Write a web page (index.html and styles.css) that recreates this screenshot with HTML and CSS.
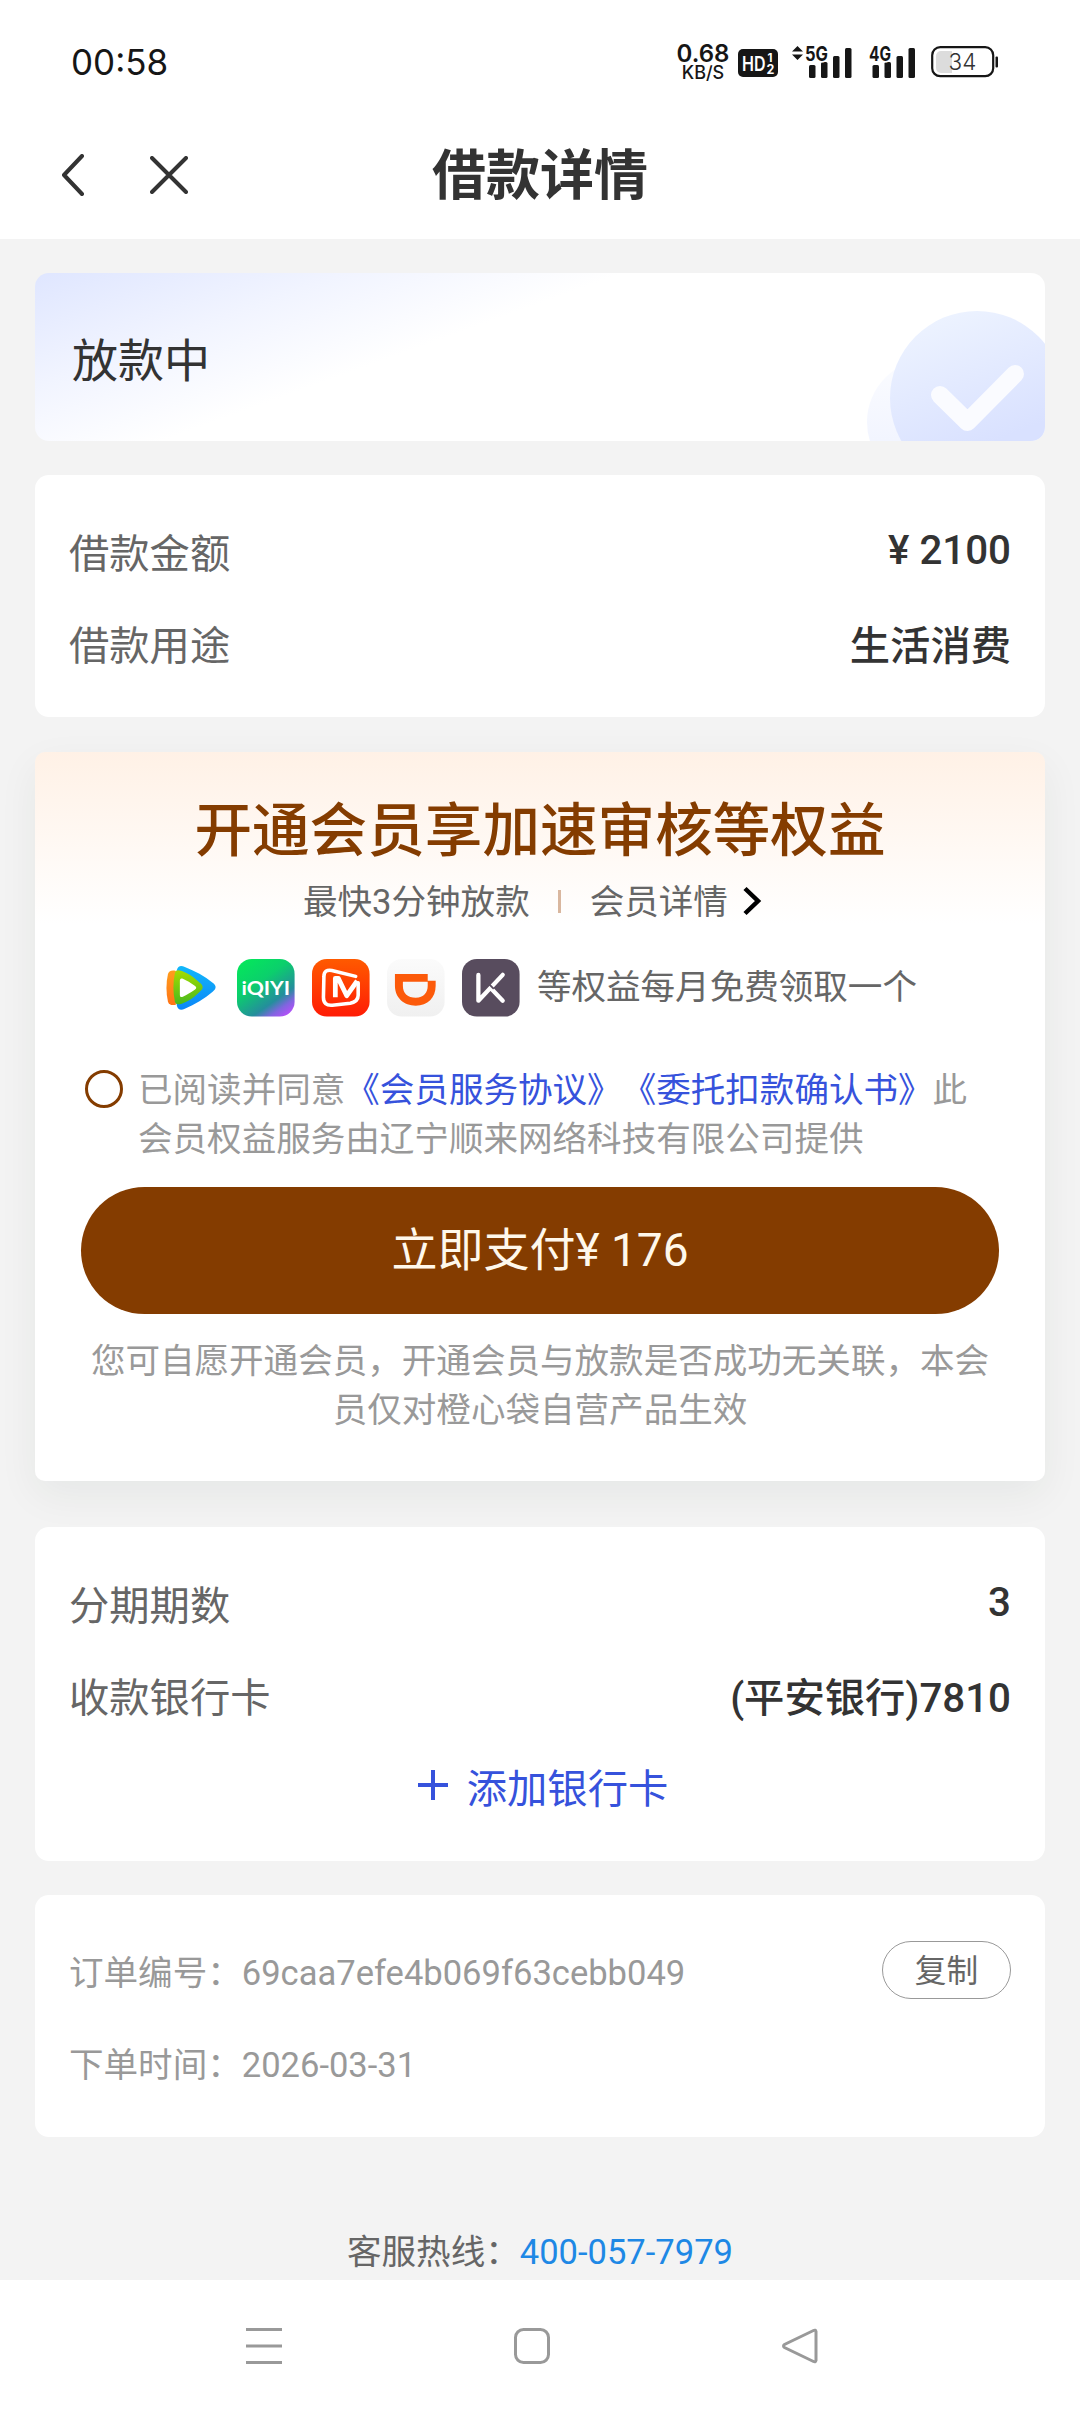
FILE: index.html
```html
<!DOCTYPE html>
<html lang="zh-CN">
<head>
<meta charset="utf-8">
<title>借款详情</title>
<link rel="stylesheet" href="styles.css">
</head>
<body>
<div class="screen">
  <div class="status-bar">
    <span class="clock">00:58</span>
    <div class="status-icons">
      <div class="speed"><span class="speed-value">0.68</span><span class="speed-unit">KB/S</span></div>
      <svg class="hd" width="40" height="28" viewBox="0 0 40 28">
        <rect width="40" height="28" rx="5" fill="#161616"/>
        <text x="4" y="21.500" font-size="20" font-weight="600" fill="#fff" textLength="23.500" lengthAdjust="spacingAndGlyphs">HD</text>
        <text x="29.500" y="13" font-size="11.500" font-weight="700" fill="#fff">1</text>
        <text x="28.500" y="25" font-size="12.500" font-weight="700" fill="#fff">2</text>
      </svg>
      <svg class="signal-5g" width="60" height="46" viewBox="0 -6 60 46">
        <path d="M0 6.500 5.500 1l5.500 5.500zM0 9.500h11L5.500 15z" fill="#161616"/>
        <g fill="#161616"><rect x="17" y="20" width="6.500" height="13" rx="1.500"/><rect x="29" y="17" width="6.500" height="16" rx="1.500"/><rect x="41" y="11" width="6.500" height="22" rx="1.500"/><rect x="53" y="3" width="6.500" height="30" rx="1.500"/></g>
        <text x="13" y="15.500" font-size="20" font-weight="700" fill="#161616" stroke="#fff" stroke-width="3" paint-order="stroke" textLength="23" lengthAdjust="spacingAndGlyphs">5G</text>
      </svg>
      <svg class="signal-4g" width="46" height="46" viewBox="0 -6 46 46">
        <g fill="#161616"><rect x="3.500" y="20" width="6.500" height="13" rx="1.500"/><rect x="15.500" y="17" width="6.500" height="16" rx="1.500"/><rect x="27.500" y="11" width="6.500" height="22" rx="1.500"/><rect x="39.500" y="3" width="6.500" height="30" rx="1.500"/></g>
        <text x="0" y="15.500" font-size="20" font-weight="700" fill="#161616" stroke="#fff" stroke-width="3" paint-order="stroke" textLength="22" lengthAdjust="spacingAndGlyphs">4G</text>
      </svg>
      <svg class="battery" width="68" height="32" viewBox="0 0 68 32">
        <rect x="1.200" y="1.200" width="61" height="29" rx="8" fill="#fff" stroke="#161616" stroke-width="2.200"/>
        <path d="M10 5h11v22H10a5 5 0 0 1-5-5V10a5 5 0 0 1 5-5z" fill="#dcdcdc"/>
        <rect x="64.500" y="10.500" width="2.500" height="11" rx="1" fill="#161616"/>
        <text x="31.500" y="24" font-size="22.500" font-weight="300" text-anchor="middle" fill="#333">34</text>
      </svg>
    </div>
  </div>

  <header class="nav">
    <div class="nav-actions">
      <svg width="24" height="42" viewBox="0 0 24 42"><path d="M21 2 3 21 21 40" class="nav-stroke"/></svg>
      <svg width="38" height="38" viewBox="0 0 38 38"><path d="M2 2l34 34M36 2 2 36" class="nav-stroke"/></svg>
    </div>
    <h1>借款详情</h1>
  </header>

  <main>
    <section class="card state">
      <span>放款中</span>
      <svg class="state-mark" width="180" height="131" viewBox="0 0 180 131">
        <defs>
          <linearGradient id="disc" x1="0.300" y1="0" x2="0.700" y2="1"><stop offset="0" stop-color="#edf3ff"/><stop offset=".75" stop-color="#d9e1ff"/></linearGradient>
          <linearGradient id="discBack" x1="0" y1="0" x2="0" y2="1"><stop offset="0" stop-color="#fbfcff"/><stop offset="1" stop-color="#edf1ff"/></linearGradient>
        </defs>
        <circle cx="65" cy="112" r="63" fill="url(#discBack)"/>
        <circle cx="112" cy="88" r="87" fill="url(#disc)"/>
        <path d="M75 85l27.500 27L150 64" fill="none" stroke="#fafbff" stroke-width="18" stroke-linecap="round" stroke-linejoin="round"/>
      </svg>
    </section>

    <section class="card rows loan">
      <div class="row"><span class="label">借款金额</span><span class="value">¥ 2100</span></div>
      <div class="row"><span class="label">借款用途</span><span class="value">生活消费</span></div>
    </section>

    <section class="card member">
      <h2>开通会员享加速审核等权益</h2>
      <div class="member-sub">
        <span>最快3分钟放款</span>
        <i class="divider"></i>
        <span>会员详情</span>
        <svg width="20" height="30" viewBox="0 0 20 30"><path d="M3 2.500 16 15 3 27.500" fill="none" stroke="#000" stroke-width="4.500"/></svg>
      </div>
      <div class="perks">
        <svg class="perk" viewBox="0 0 58 58">
          <defs>
            <linearGradient id="txB" x1="0" y1="0" x2="0" y2="1"><stop offset="0" stop-color="#12b8fa"/><stop offset="1" stop-color="#0b86f8"/></linearGradient>
            <linearGradient id="txO" x1="0" y1="0" x2="0" y2="1"><stop offset="0" stop-color="#ff9d1c"/><stop offset="1" stop-color="#ff7316"/></linearGradient>
            <linearGradient id="txG" x1="0" y1="0" x2="0" y2="1"><stop offset="0" stop-color="#a5dc00"/><stop offset="1" stop-color="#48b91d"/></linearGradient>
          </defs>
          <path d="M15 11c1-4 4-5 8-3 10 4 20 9 28 16 4 3 4 6 0 9-8 7-18 13-28 17-4 2-7 1-8-3-2-12-2-24 0-36z" fill="url(#txB)"/>
          <path d="M6 15c1-3 4-4 8-3v34c-4 1-7 0-8-3-2-9-2-19 0-28z" fill="url(#txO)"/>
          <path d="M13 14c1-3 3-3 7-2 8 3 13 7 18 12 4 3 4 6 0 9-5 5-10 9-18 12-4 1-6 1-7-2-2-10-2-19 0-29z" fill="url(#txG)"/>
          <path d="M18 22c0-2 1-3 3-2 4 2 8 4 12 7 2 1 2 3 0 4-4 3-8 5-12 7-2 1-3 0-3-2z" fill="#fff"/>
        </svg>
        <svg class="perk" viewBox="0 0 58 58">
          <defs><linearGradient id="iq" x1="0.200" y1="0" x2="0.900" y2="1"><stop offset="0" stop-color="#05e55c"/><stop offset=".35" stop-color="#0bcf6c"/><stop offset=".7" stop-color="#248e9c"/><stop offset=".84" stop-color="#8065df"/><stop offset="1" stop-color="#c04bff"/></linearGradient></defs>
          <rect width="58" height="58" rx="15" fill="url(#iq)"/>
          <text x="4.500" y="36.500" font-size="20" font-weight="700" font-family="Lato, sans-serif" fill="#fff" textLength="49" lengthAdjust="spacingAndGlyphs">iQIYI</text>
        </svg>
        <svg class="perk" viewBox="0 0 58 58">
          <defs><linearGradient id="mg" x1="0" y1="0" x2="0" y2="1"><stop offset="0" stop-color="#ff5a00"/><stop offset="1" stop-color="#ff1c05"/></linearGradient></defs>
          <rect width="58" height="58" rx="15" fill="url(#mg)"/>
          <path d="M44 17.500 20 11.500c-5-1-8 1-8 6l-.500 21c0 6 3 8.500 9 8l18-2c5-1 8-3 8-8V24" fill="none" stroke="#fff" stroke-width="3.600" stroke-linecap="round" stroke-linejoin="round"/>
          <path d="M23.500 38.500V19.500h3L35 37l10.500-15" fill="none" stroke="#fff" stroke-width="4.800" stroke-linejoin="round"/>
        </svg>
        <svg class="perk" viewBox="0 0 58 58">
          <defs><linearGradient id="dd" x1="0" y1="0" x2="0" y2="1"><stop offset="0" stop-color="#fbfbfb"/><stop offset="1" stop-color="#f0f0f0"/></linearGradient></defs>
          <rect width="58" height="58" rx="15" fill="url(#dd)"/>
          <path fill-rule="evenodd" d="M8 15h33v7h8v5c0 12-8 20-20 20S8 39 8 27zM16 23v4c0 8 5 12 13 12s12-5 12-12v-4z" fill="#fc5a0a"/>
        </svg>
        <svg class="perk" viewBox="0 0 58 58">
          <rect width="58" height="58" rx="15" fill="#584c5e"/>
          <path d="M16.500 16v26L41 16M30.500 31 41 42" fill="none" stroke="#fff" stroke-width="4.300" stroke-linecap="round" stroke-linejoin="round"/>
          <path d="M27 25l5 5" stroke="#584c5e" stroke-width="1.800"/>
        </svg>
        <span>等权益每月免费领取一个</span>
      </div>
      <div class="agree">
        <i class="radio"></i>
        <p>已阅读并同意<a>《会员服务协议》</a><a>《委托扣款确认书》</a>此<br>会员权益服务由辽宁顺来网络科技有限公司提供</p>
      </div>
      <button class="pay">立即支付¥ 176</button>
      <p class="note">您可自愿开通会员，开通会员与放款是否成功无关联，本会<br>员仅对橙心袋自营产品生效</p>
    </section>

    <section class="card rows bank">
      <div class="row"><span class="label">分期期数</span><span class="value">3</span></div>
      <div class="row"><span class="label">收款银行卡</span><span class="value">(平安银行)7810</span></div>
      <div class="add">
        <svg width="30" height="30" viewBox="0 0 30 30"><path d="M15 0v30M0 15h30" stroke="#3652dc" stroke-width="4"/></svg>
        <span>添加银行卡</span>
      </div>
    </section>

    <section class="card order">
      <div class="row"><span>订单编号：69caa7efe4b069f63cebb049</span><button class="copy">复制</button></div>
      <div class="row"><span>下单时间：2026-03-31</span></div>
    </section>

    <p class="hotline">客服热线：<a>400-057-7979</a></p>
  </main>

  <footer class="system-nav">
    <svg width="36" height="36" viewBox="0 0 36 36"><path d="M0 1.500h36M0 18h36M0 34.500h36" class="sys-stroke"/></svg>
    <svg width="36" height="36" viewBox="0 0 36 36"><rect x="1.500" y="1.500" width="33" height="33" rx="8" class="sys-stroke"/></svg>
    <svg width="36" height="36" viewBox="0 0 36 36"><path d="M31.500 2.500 2.500 16.500q-2 1.500 0 3L31.500 33.500q2 1 2.500-1V3.500q-.5-2-2.500-1z" class="sys-stroke"/></svg>
  </footer>
</div>
</body>
</html>
```
FILE: styles.css
```css
* { box-sizing: border-box; margin: 0; padding: 0; }

body {
  background: #f3f3f3;
  color: #333;
  font-family: Roboto, "Noto Sans CJK SC", sans-serif;
  text-spacing-trim: space-all;
}

svg { display: block; flex: none; }
button { font-family: inherit; border: 0; background: none; }
i { display: block; flex: none; }

.screen {
  display: flex;
  flex-direction: column;
  width: 1080px;
  height: 2412px;
  overflow: hidden;
}

/* system status bar */
.status-bar {
  display: flex;
  justify-content: space-between;
  align-items: center;
  height: 124px;
  padding: 0 81px 0 71px;
  background: #fff;
  color: #161616;
  font-family: Inter, sans-serif;
}
.clock { font-size: 35px; line-height: 40px; }
.status-icons { display: flex; align-items: center; font-family: Inter, sans-serif; }
.speed {
  display: flex;
  flex-direction: column;
  align-items: center;
  width: 52px;
  font-weight: 600;
}
.speed-value { font-size: 24px; line-height: 21px; }
.speed-unit { font-size: 18px; line-height: 18px; font-weight: 500; }
.hd { margin: 2px 0 0 9px; }
.signal-5g { margin-left: 14px; }
.signal-4g { margin-left: 17px; }
.battery { margin-left: 16px; }

/* page header */
.nav {
  display: grid;
  grid-template-columns: 1fr auto 1fr;
  align-items: center;
  height: 115px;
  padding: 0 61px 14px;
  background: #fff;
}
.nav h1 {
  grid-column: 2;
  padding-top: 4px;
  font-size: 54px;
  line-height: 76px;
  font-weight: 700;
}
.nav-actions { display: flex; align-items: center; gap: 65px; }
.nav-stroke { fill: none; stroke: #333; stroke-width: 4; stroke-linecap: round; stroke-linejoin: round; }

/* cards */
main { padding: 34px 35px 0; height: 2041px; }
.card { background: #fff; border-radius: 14px; }
.row { display: flex; justify-content: space-between; align-items: center; }

.state {
  position: relative;
  display: flex;
  align-items: center;
  height: 168px;
  padding: 0 37px;
  overflow: hidden;
  background: linear-gradient(160deg, #dfe6ff 0%, #f1f4ff 21%, #fff 40%);
  font-size: 46px;
}
.state-mark { position: absolute; right: 0; bottom: 0; }

.rows { padding: 29px 34px 0; font-size: 40.3px; }
.rows .row { height: 92px; }
.label { color: #666; }
.value { font-weight: 500; }
.loan { height: 242px; margin-top: 34px; }

/* membership offer */
.member {
  height: 729px;
  margin-top: 35px;
  padding-top: 43px;
  border-radius: 10px;
  background: linear-gradient(#fff1e6 0, #fff 172px);
  box-shadow: 0 14px 42px rgba(20, 50, 40, 0.06);
  color: #666;
  font-size: 34.56px;
}
.member h2 {
  color: #843c00;
  font-size: 57.6px;
  line-height: 74px;
  font-weight: 500;
  text-align: center;
}
.member-sub {
  display: flex;
  align-items: center;
  height: 64px;
  padding-left: 268px;
}
.member-sub span { padding-bottom: 5px; }
.divider { width: 3px; height: 23px; margin: 0 29px 0 28px; background: #d9b79f; }
.member-sub svg { margin-left: 14px; }
.perks {
  display: flex;
  align-items: center;
  gap: 17.4px;
  height: 58px;
  margin-top: 26px;
  padding-left: 127px;
}
.perk { width: 57.6px; height: 57.6px; }
.perks span { line-height: 50px; padding-bottom: 2px; }
.agree {
  display: flex;
  align-items: flex-start;
  gap: 15px;
  margin: 49px 0 0 50px;
  color: #999;
  line-height: 49px;
  white-space: nowrap;
}
.agree a { color: #3652dc; }
.radio { width: 38px; height: 38px; margin-top: 4px; border: 3px solid #843c00; border-radius: 50%; }
.pay {
  display: block;
  width: 918px;
  height: 127px;
  margin: 23px auto 0;
  padding-bottom: 10px;
  border-radius: 64px;
  background: #843c00;
  color: #fff8eb;
  font-size: 46px;
}
.note { margin-top: 23px; color: #999; line-height: 49px; text-align: center; }

/* bank card */
.bank { height: 334px; margin-top: 46px; }
.add {
  display: flex;
  justify-content: center;
  align-items: center;
  gap: 19px;
  height: 90px;
  padding-left: 6px;
  color: #3652dc;
}

/* order info */
.order {
  height: 242px;
  margin-top: 34px;
  padding: 29px 34px 0;
  color: #999;
  font-size: 34.56px;
}
.order .row { height: 92px; }
.copy {
  width: 129px;
  height: 58px;
  padding-bottom: 4px;
  border: 1px solid #999;
  border-radius: 29px;
  color: #666;
  font-size: 31.7px;
}

.hotline { margin-top: 94px; color: #666; font-size: 34.56px; line-height: 42px; text-align: center; }
.hotline a { color: #1e88e5; }

/* system navigation */
.system-nav {
  display: flex;
  gap: 232px;
  height: 132px;
  padding: 48px 0 0 246px;
  background: #fff;
}
.sys-stroke { fill: none; stroke: #999; stroke-width: 3; }
```
